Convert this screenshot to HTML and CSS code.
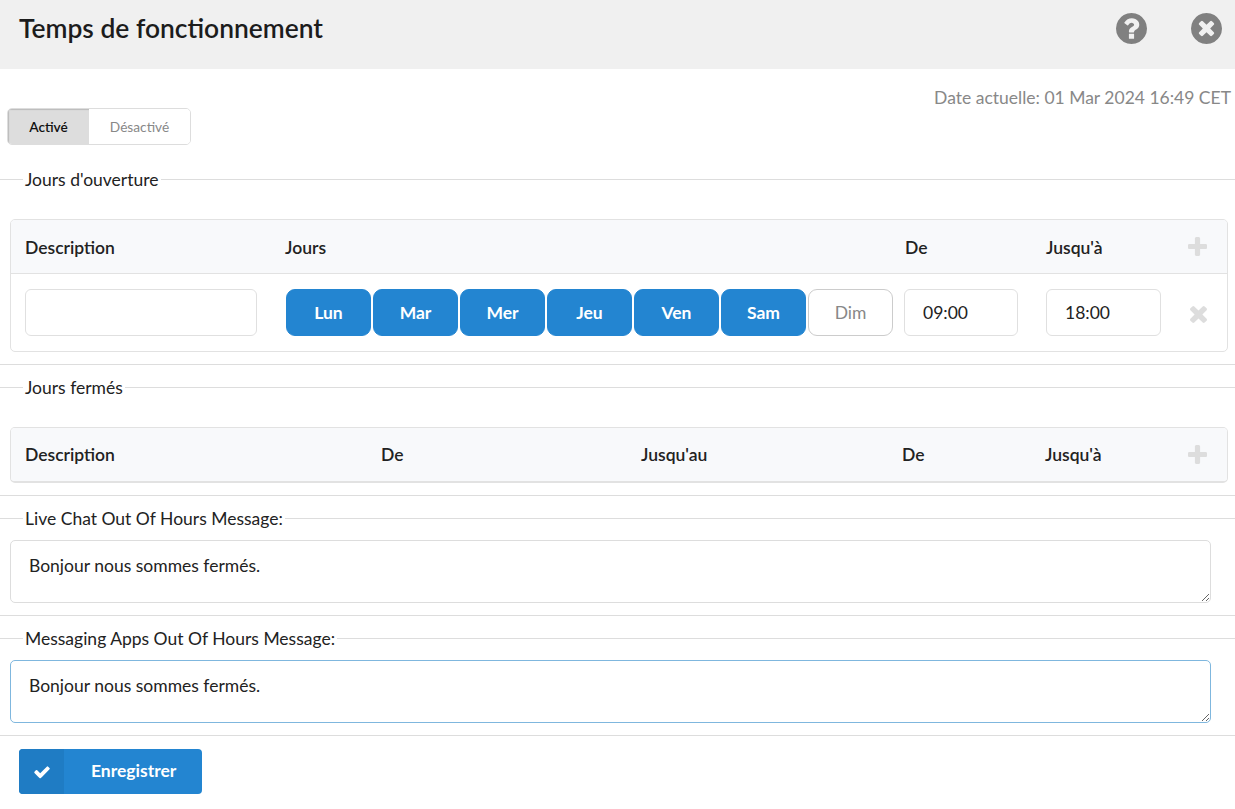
FILE: index.html
```html
<!DOCTYPE html>
<html>
<head>
  <meta charset="UTF-8">
  <title>Temps de fonctionnement</title>
  <link rel="stylesheet" href="styles.css">
</head>
<body>

  <header class="top-bar">
    <h1>Temps de fonctionnement</h1>
    <div class="top-icons">
      <svg class="top-icon" viewBox="128 128 1536 1536"><path d="M1024 1376v-192q0-14-9-23t-23-9h-192q-14 0-23 9t-9 23v192q0 14 9 23t23 9h192q14 0 23-9t9-23zm256-672q0-88-55.5-163t-138.5-116-170-41q-243 0-371 213-15 24 8 42l132 100q7 6 19 6 16 0 25-12 53-68 86-92 34-24 86-24 48 0 85.5 26t37.5 59q0 38-20 61t-68 45q-63 28-115.5 86.5t-52.5 125.5v36q0 14 9 23t23 9h192q14 0 23-9t9-23q0-19 21.5-49.5t54.5-49.5q32-18 49-28.5t46-35 44.5-48 28-60.5 12.5-81zm384 192q0 209-103 385.5t-279.5 279.5-385.5 103-385.5-103-279.5-279.5-103-385.5 103-385.5 279.5-279.5 385.5-103 385.5 103 279.5 279.5 103 385.5z"/></svg>
      <svg class="top-icon" viewBox="128 128 1536 1536"><path d="M1277 1122q0-26-19-45l-181-181 181-181q19-19 19-45 0-27-19-46l-90-90q-19-19-46-19-26 0-45 19l-181 181-181-181q-19-19-45-19-27 0-46 19l-90 90q-19 19-19 46 0 26 19 45l181 181-181 181q-19 19-19 45 0 27 19 46l90 90q19 19 46 19 26 0 45-19l181-181 181 181q19 19 45 19 27 0 46-19l90-90q19-19 19-46zm387-226q0 209-103 385.5t-279.5 279.5-385.5 103-385.5-103-279.5-279.5-103-385.5 103-385.5 279.5-279.5 385.5-103 385.5 103 279.5 279.5 103 385.5z"/></svg>
    </div>
  </header>

  <div class="current-date">Date actuelle: 01 Mar 2024 16:49 CET</div>

  <div class="toggle">
    <button type="button" class="toggle-btn active">Activé</button>
    <button type="button" class="toggle-btn">Désactivé</button>
  </div>

  <form>
    <fieldset class="section">
      <legend>Jours d'ouverture</legend>
      <div class="card">
        <div class="card-head open-cols">
          <span>Description</span>
          <span>Jours</span>
          <span class="head-shift">De</span>
          <span>Jusqu'à</span>
          <svg class="plus-icon" viewBox="0 192 1408 1408"><path d="M1408 800v192q0 40-28 68t-68 28h-416v416q0 40-28 68t-68 28h-192q-40 0-68-28t-28-68v-416h-416q-40 0-68-28t-28-68v-192q0-40 28-68t68-28h416v-416q0-40 28-68t68-28h192q40 0 68 28t28 68v416h416q40 0 68 28t28 68z"/></svg>
        </div>
        <div class="card-row open-cols">
          <input class="field desc-field" type="text">
          <div class="days">
            <button type="button" class="day on">Lun</button>
            <button type="button" class="day on">Mar</button>
            <button type="button" class="day on">Mer</button>
            <button type="button" class="day on">Jeu</button>
            <button type="button" class="day on">Ven</button>
            <button type="button" class="day on">Sam</button>
            <button type="button" class="day">Dim</button>
          </div>
          <input class="field from-field" type="text" value="09:00">
          <input class="field to-field" type="text" value="18:00">
          <svg class="remove-icon" viewBox="110 366 1188 1188"><path d="M1298 1322q0 40-28 68l-136 136q-28 28-68 28t-68-28l-294-294-294 294q-28 28-68 28t-68-28l-136-136q-28-28-28-68t28-68l294-294-294-294q-28-28-28-68t28-68l136-136q28-28 68-28t68 28l294 294 294-294q28-28 68-28t68 28l136 136q28 28 28 68t-28 68l-294 294 294 294q28 28 28 68z"/></svg>
        </div>
      </div>
    </fieldset>

    <fieldset class="section">
      <legend>Jours fermés</legend>
      <div class="card closed-card">
        <div class="card-head closed-cols">
          <span>Description</span>
          <span>De</span>
          <span>Jusqu'au</span>
          <span>De</span>
          <span>Jusqu'à</span>
          <svg class="plus-icon" viewBox="0 192 1408 1408"><path d="M1408 800v192q0 40-28 68t-68 28h-416v416q0 40-28 68t-68 28h-192q-40 0-68-28t-28-68v-416h-416q-40 0-68-28t-28-68v-192q0-40 28-68t68-28h416v-416q0-40 28-68t68-28h192q40 0 68 28t28 68v416h416q40 0 68 28t28 68z"/></svg>
        </div>
      </div>
    </fieldset>

    <fieldset class="section msg-section">
      <legend>Live Chat Out Of Hours Message:</legend>
      <textarea class="msg">Bonjour nous sommes fermés.</textarea>
    </fieldset>

    <fieldset class="section msg-section">
      <legend>Messaging Apps Out Of Hours Message:</legend>
      <textarea class="msg focused">Bonjour nous sommes fermés.</textarea>
    </fieldset>

    <button type="button" class="save-btn">
      <span class="save-icon">
        <svg viewBox="0 0 1792 1792"><path d="M1671 566q0 40-28 68l-724 724-136 136q-28 28-68 28t-68-28l-136-136-362-362q-28-28-28-68t28-68l136-136q28-28 68-28t68 28l294 295 656-657q28-28 68-28t68 28l136 136q28 28 28 68z"/></svg>
      </span>
      <span class="save-text">Enregistrer</span>
    </button>
  </form>

</body>
</html>
```

FILE: styles.css
```css
body {
  margin: 0;
  background-color: #fff;
  color: #222;
  font-family: Lato, "Open Sans", sans-serif;
  font-size: 17.5px;
  overflow: hidden;
}

.top-bar {
  height: 69px;
  background-color: #f0f0f0;
  display: flex;
  align-items: center;
  justify-content: space-between;
  padding: 0 13px 0 19px;
}

.top-bar h1 {
  margin: 0;
  font-size: 26.4px;
  font-weight: 600;
  color: #1c1c1c;
  position: relative;
  top: -7px;
}

.top-icons {
  display: flex;
  gap: 44px;
  position: relative;
  top: -6px;
}

.top-icon {
  width: 31px;
  height: 31px;
  fill: #808080;
}

.current-date {
  margin-top: 18px;
  padding-right: 4px;
  height: 21px;
  line-height: 21px;
  text-align: right;
  color: #888;
}

.toggle {
  display: flex;
  width: 182px;
  height: 35px;
  margin: 0 0 24px 7px;
  border: 1px solid #ddd;
  border-radius: 5px;
  overflow: hidden;
}

.toggle-btn {
  border: none;
  background-color: #fff;
  color: #888;
  font-family: inherit;
  font-size: 13.7px;
  padding: 0;
  flex: 1;
}

.toggle-btn.active {
  flex: 0 0 81px;
  background-color: #ddd;
  color: #111;
  font-weight: 600;
  box-shadow: inset 1px 1px 1px #bbb;
}

.section {
  margin: 0 0 12px;
  padding: 30px 0 12px;
  min-width: 0;
  border: 0;
  border-top: 1px solid #ddd;
  border-bottom: 1px solid #ddd;
}

.section legend {
  margin-left: 23px;
  padding: 2px 2px 0;
  line-height: 18px;
  color: #222;
}

.msg-section {
  padding-top: 12px;
}

.card {
  margin: 0 7px 0 10px;
  border: 1px solid #e2e2e2;
  border-radius: 5px;
  overflow: hidden;
}

.closed-card {
  border-bottom-width: 2px;
}

.card-head {
  box-sizing: border-box;
  height: 53px;
  background-color: #f8f9fb;
  align-items: center;
  font-weight: 600;
  color: #222;
  padding: 2px 0 0 14px;
}

.open-cols {
  display: grid;
  grid-template-columns: 260px 619px 142px 129px 1fr;
}

.closed-cols {
  display: grid;
  grid-template-columns: 356px 260px 261px 143px 129px 1fr;
  padding-top: 0;
}

.card-row {
  height: 77px;
  border-top: 1px solid #e2e2e2;
  padding-left: 14px;
  align-items: center;
}

.head-shift {
  padding-left: 1px;
}

.plus-icon {
  width: 19px;
  height: 19px;
  fill: #ddd;
  justify-self: center;
  margin: 0 7px 2px 0;
}

.closed-cols .plus-icon {
  margin-bottom: 0;
}

.remove-icon {
  width: 17px;
  height: 17px;
  fill: #ddd;
  justify-self: center;
  margin-right: 6px;
  margin-top: 4px;
}

.field {
  box-sizing: border-box;
  height: 47px;
  border: 1px solid #e0e0e0;
  border-radius: 6px;
  padding: 0 18px;
  font-family: inherit;
  font-size: 17.5px;
  color: #222;
  background-color: #fff;
}

.desc-field {
  width: 232px;
}

.from-field {
  width: 114px;
}

.to-field {
  width: 115px;
}

.days {
  display: flex;
  gap: 2px;
  padding-left: 1px;
}

.day {
  width: 85px;
  height: 47px;
  border: 1px solid #ccc;
  border-radius: 9px;
  background-color: #fff;
  color: #888;
  font-family: inherit;
  font-size: 17.5px;
  padding: 0;
}

.day.on {
  background-color: #2385d1;
  border-color: #2385d1;
  color: #fff;
  font-weight: 700;
}

.msg {
  display: block;
  box-sizing: border-box;
  width: 1201px;
  height: 63px;
  margin-left: 10px;
  padding: 14px 18px;
  border: 1px solid #ddd;
  border-radius: 5px;
  outline: none;
  font-family: inherit;
  font-size: 17.5px;
  line-height: 22px;
  color: #222;
}

.msg.focused {
  border-color: #7fb7de;
}

.save-btn {
  display: flex;
  width: 183px;
  height: 45px;
  margin: 13px 0 0 19px;
  padding: 0;
  border: none;
  border-radius: 4px;
  overflow: hidden;
  background-color: #2385d1;
  color: #fff;
  font-family: inherit;
  font-size: 17.5px;
  font-weight: 700;
}

.save-icon {
  width: 45px;
  height: 100%;
  background-color: #1f7cc4;
  display: flex;
  align-items: center;
  justify-content: center;
}

.save-icon svg {
  width: 18px;
  height: 18px;
  fill: #fff;
}

.save-text {
  margin-left: 27px;
  line-height: 43px;
}
```
